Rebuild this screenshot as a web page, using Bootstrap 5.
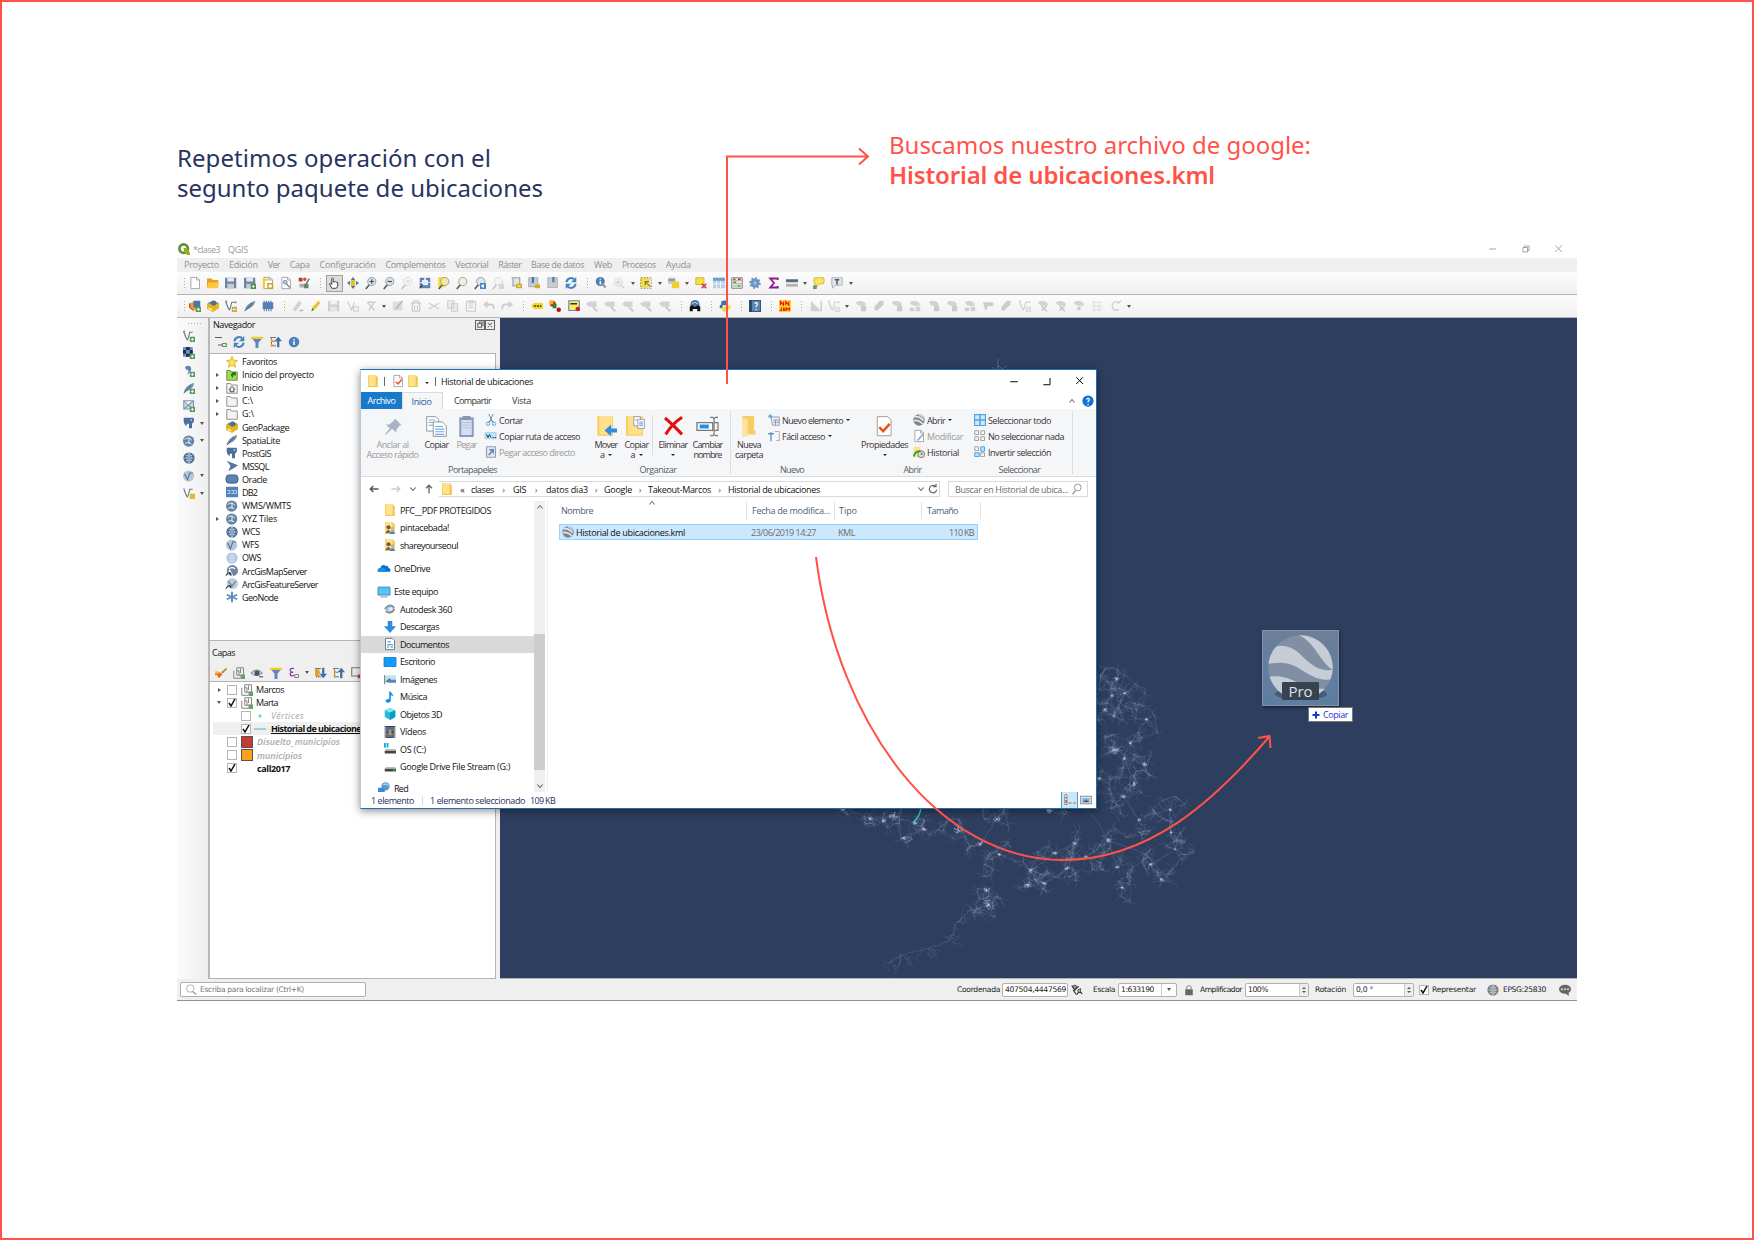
<!DOCTYPE html>
<html lang="es">
<head>
<meta charset="utf-8">
<title>Historial de ubicaciones</title>
<link href="https://cdn.jsdelivr.net/npm/bootstrap@5.3.0/dist/css/bootstrap.min.css" rel="stylesheet">
<style>
:root{--red:#ff5349;--navy:#28345f;--ui:"Open Sans","Noto Sans",sans-serif}
body{width:1754px;height:1240px;overflow:hidden;font-family:var(--ui);font-size:9px;line-height:1;color:#111;background:#fff}
.sheet{width:1754px;height:1240px;border:2px solid var(--red);position:relative;padding:0 175px}
[data-w]{white-space:nowrap;display:inline-block}
[data-i]{display:inline-flex;flex:none;align-items:center;justify-content:center}
[data-i] svg{width:12px;height:12px;display:block;overflow:visible}
.headline{height:238px;font-family:"Noto Sans",sans-serif;font-size:24px;line-height:30px}
.headline .ask{color:var(--navy);padding-top:141px;width:712px}
.headline .find{color:var(--red);padding-top:128px}
.headline b{font-weight:600}
.qgis{width:1400px;height:761px;background:#efefef;position:relative}
.q-title{height:18px;background:#fff;color:#999;padding-left:1px}
.q-menu{height:14px;background:#efefef;color:#909090;gap:9.9px;padding-left:7px;padding-bottom:1px}
.q-tools{height:22px;background:linear-gradient(#fcfcfc,#f0f0f0)}
.q-tools.one,.q-tools.two{border-bottom:1.5px solid #b5b5b5;height:23px}
.tl{width:18.2px;height:20px}
.tl.on{background:#dcdcdc;border:1px solid #a0a0a0;width:16.4px;height:17px;margin:0 .9px}
.tl.off{opacity:.32;filter:grayscale(1)}
.grip{width:12px;height:12px;flex:none;background:radial-gradient(circle,#aaa 0 .7px,transparent .9px) 6px 0/3px 3px repeat-y}
.grip.first{width:9px}
.dd{width:9px;flex:none;display:inline-flex;justify-content:center}
.dd::after{content:"";border:2.7px solid transparent;border-top:3px solid #555;border-bottom:0}
.q-body{height:661px}
.q-side{width:31px;background:linear-gradient(90deg,#fbfbfb,#efefef)}
.q-side::before{content:"";display:block;width:14px;height:3px;margin:4px 0 2px 10px;background:radial-gradient(circle,#aaa 0 .7px,transparent .9px) 0 0/3px 3px repeat-x}
.q-side>div{height:17.5px;padding-left:3px}
.q-side .tl{width:17px}
.q-panels{width:292px;border-left:2px solid #b8b8b8;padding-right:4px;height:661px}
.p-head{height:13px;padding:0 0 0 3px}
.p-tools{height:22px;padding-left:2px}
.tree{background:#fff;border:1px solid #b4b4b4;border-width:1px 1.5px 1px 0;padding-top:1px}
.t-row{height:13.1px;padding-left:1px}
.t-row .ar{width:12px;flex:none;display:inline-flex;justify-content:center}
.t-row .ar.r::after{content:"";border:2.5px solid transparent;border-left:3.5px solid #555;border-right:0}
.t-row .ar.d::after{content:"";border:2.7px solid transparent;border-top:3.5px solid #555;border-bottom:0}
.t-row [data-i]{width:17px;margin-right:2px}
.chk{width:10px;height:10px;border:1px solid #b5b5b5;background:#fff;flex:none;display:inline-flex;align-items:center;justify-content:center}
.chk svg{width:8px;height:8px}
.lay{padding-left:3px}
.lay .t-row{padding-left:0}
.lay .ar{width:14px;padding-right:2px}
.sw{width:12px;height:12px;border:1px solid #555;flex:none;margin:0 4px}
.dim{font-style:italic;color:#aaa;font-weight:600}
.q-map{flex:1;background:#2e3e5f;border-bottom:1px solid #b5b5b5;overflow:hidden;height:661px}
.q-map svg{display:block}
.q-status{height:22px;border-bottom:1px solid #9a9085;font-family:"DejaVu Sans","Open Sans",sans-serif;font-size:7.6px;color:#222}
.q-status .box{height:14px;background:#fff;border:1px solid #b0b0b0;border-radius:2px;display:inline-flex;align-items:center;flex:none;padding-left:2px;white-space:nowrap;overflow:hidden}
.spin{margin-left:auto;width:9px;height:12px;background:#eee;border-left:1px solid #ccc;display:inline-flex;flex-direction:column;align-items:center;justify-content:center;gap:2px}
.spin::before{content:"";border:2px solid transparent;border-bottom:2.5px solid #555;border-top:0}
.spin::after{content:"";border:2px solid transparent;border-top:2.5px solid #555;border-bottom:0}
/* explorer window */
.exp{position:absolute;left:358px;top:367px;width:737px;height:440px;background:#fff;border:1px solid #1a6fb4;border-left-color:#b9c7d6;box-shadow:0 2px 8px rgba(0,0,0,.45)}
.e-title{height:22px}
.e-tabs{height:17px}
.e-tabs .arch{width:41px;background:#1979ca;color:#fff}
.e-tabs .ini{width:41px;background:#f5f6f7;border:1px solid #dadbdc;border-bottom:0;color:#2b579a;padding-right:2px}
.rib{height:68px;background:#f5f6f7;border-bottom:1px solid #dadbdc;color:#3a3238}
.big{text-align:center;display:flex;flex-direction:column;align-items:center;flex:none;padding-top:5px}
.big [data-i]{height:24px}.big [data-i] svg{width:21px;height:21px}
.big .cp{line-height:9.6px;margin-top:2px}
.smalls{display:flex;flex-direction:column;padding-top:3px;flex:none}
.smalls>div{height:16px;display:flex;align-items:center;white-space:nowrap}
.smalls [data-i]{width:14px;margin-right:1px}
.grp{display:flex;flex-direction:column;height:67px;flex:none}
.grp .row1{display:flex;height:54px}
.grp .gl{color:#555c66;text-align:center;padding-top:2px}
.off-t{color:#9a9a9a}
.vs{width:1px;background:#dcdde0;flex:none}
.car{display:inline-block;border:2px solid transparent;border-top:2.5px solid #222;border-bottom:0;vertical-align:middle;margin:0 0 1px 3px}
.e-addr{height:24px;padding-left:7px}
.abox{height:16px;border:1px solid #d9d9d9;display:flex;align-items:center;flex:none;white-space:nowrap}
.sepc{width:17px;text-align:center;color:#555;flex:none}
.e-nav{width:173px;height:291px;overflow:hidden}
.n-row{height:17.5px;display:flex;align-items:center;padding-left:22px;flex:none;white-space:nowrap}
.n-row [data-i]{width:14px;margin-right:3px}
.n-row.top{padding-left:16px}
.n-row.sel{background:#d9d9d9}
.sb{width:11px;background:#f0f0f0;height:291px;display:flex;flex-direction:column;align-items:center}
.sb .thumb{width:11px;height:136px;background:#cdcdcd;margin-top:121px}
.c-head{color:#4c607a;height:18px;padding-top:1px}
.c-head>div{border-right:1px solid #e2e2e2;padding-left:5px;display:flex;align-items:center;flex:none}
.f-row{height:16px;background:#cce8ff;border:1px solid #99d1ff;width:419px;margin:5px 0 0 11px;color:#6d6d6d}
.e-stat{height:16px;color:#2a2f5a;padding-left:10px}
.overlay{position:absolute;left:-2px;top:-2px;width:1754px;height:1240px;pointer-events:none}
.drag{position:absolute;left:1260px;top:628px;width:77px;height:76px;background:linear-gradient(#6b7f99,#5d7da1);border:1px solid #7f93ab;box-shadow:1px 2px 3px rgba(0,0,0,.4)}
.drag .pro{position:absolute;left:19px;top:51px;width:37px;height:18px;background:#39424f;color:#dfe4ea;font-size:15px;line-height:18px;text-align:center;border-radius:1px}
.tipc{position:absolute;left:1306px;top:705px;width:45px;height:15px;background:#fff;border:1px solid #777;color:#2b36c8;display:flex;align-items:center;padding-left:3px;gap:3px}
</style>
<script src="https://cdn.jsdelivr.net/npm/bootstrap@5.3.0/dist/js/bootstrap.bundle.min.js"></script>
</head>
<body>
<main class="sheet">
  <header class="headline d-flex">
    <div class="ask"><span data-w="314">Repetimos operación con el</span><br><span data-w="366">segunto paquete de ubicaciones</span></div>
    <div class="find"><span data-w="422">Buscamos nuestro archivo de google:</span><br><b data-w="326">Historial de ubicaciones.kml</b></div>
  </header>

  <section class="qgis">
    <div class="q-title d-flex align-items-center"><span data-i="qgis"></span><span style="margin-left:3px" data-w="27">*clase3</span><span class="ms-2" data-w="20">QGIS</span>
      <span class="ms-auto d-flex align-items-center" style="gap:21px;margin-right:12px"><span data-i="min"></span><span data-i="rest"></span><span data-i="close"></span></span></div>
    <nav class="q-menu d-flex align-items-center">
      <span data-w="35">Proyecto</span><span data-w="29">Edición</span><span data-w="12">Ver</span><span data-w="20">Capa</span><span data-w="56">Configuración</span><span data-w="60">Complementos</span><span data-w="33">Vectorial</span><span data-w="23">Ráster</span><span data-w="53">Base de datos</span><span data-w="18">Web</span><span data-w="34">Procesos</span><span data-w="25">Ayuda</span>
    </nav>
    <div class="q-tools one d-flex align-items-center" data-tools="/ new open save saveas layout layman style | +hand panmap zin zout -z11 zfull zsel zlay zlast -znext newview bmnew bm refresh | ident -query ~ select ~ selform ~ desel table calc gear sigma ruler ~ tip note ~"></div>
    <div class="q-tools two d-flex align-items-center" data-tools="/ dsm geopk vnew feather chip | -pencils pencil -savee -vpt -vertex ~ -modify -trash -cut -copy -paste -undo -redo | label diag labelw -lab -lab -lab -lab -lab | bino | python | help | nn | -tri -vnew ~ -poly -rot -poly -polys -poly -poly -polys -shape -rot -vnew -split -split -merge -grid -turn ~"></div>

    <div class="q-body d-flex">
      <div class="q-side" data-side="vnew raster comma feather mesh elephant~ wms~ globe wfs~ vgold~"></div>
      <div class="q-panels">
        <div class="p-head d-flex align-items-center"><span data-w="42">Navegador</span><span class="ms-auto d-flex"><span data-i="float"></span><span data-i="pclose" style="margin-left:-2px"></span></span></div>
        <div class="p-tools d-flex align-items-center"><span class="tl" data-i="addl"></span><span class="tl" data-i="refresh"></span><span class="tl" data-i="filter"></span><span class="tl" data-i="collapse"></span><span class="tl" data-i="info"></span></div>
        <div class="tree" style="height:288px" data-tree=".star:Favoritos:35 >homep:Inicio del proyecto:72 >home:Inicio:21 >fold:C:\:11 >fold:G:\:12 .geopk:GeoPackage:47 .feather:SpatiaLite:38 .elephant:PostGIS:29 .mssql:MSSQL:27 .oracle:Oracle:25 .db2:DB2:15 .wms:WMS/WMTS:49 >wms:XYZ Tiles:35 .globe:WCS:18 .wfs:WFS:17 .ows:OWS:19 .arc:ArcGisMapServer:65 .arc2:ArcGisFeatureServer:76 .geonode:GeoNode:36"></div>
        <div class="p-head d-flex align-items-center" style="height:23px;padding-left:2px"><span data-w="23">Capas</span></div>
        <div class="p-tools d-flex align-items-center" style="height:17px"><span class="tl" data-i="brush"></span><span class="tl" data-i="group"></span><span class="tl" data-i="eye"></span><span class="tl" data-i="filter"></span><span class="tl" data-i="eps"></span><span class="dd"></span><span class="tl" data-i="expand"></span><span class="tl" data-i="collapse"></span><span class="tl" data-i="remove"></span></div>
        <div class="tree lay" style="height:298px">
          <div class="t-row d-flex align-items-center"><span class="ar r"></span><span class="chk"></span><span data-i="group" style="margin:0 1px"></span><span data-w="28">Marcos</span></div>
          <div class="t-row d-flex align-items-center"><span class="ar d"></span><span class="chk" data-c></span><span data-i="group" style="margin:0 1px"></span><span data-w="22">Marta</span></div>
          <div class="t-row d-flex align-items-center"><span class="ar" style="width:28px"></span><span class="chk"></span><span data-i="dot" style="width:18px"></span><span class="dim fw-normal" data-w="33">Vértices</span></div>
          <div class="t-row d-flex align-items-center overflow-hidden" style="background:#efefef"><span class="ar" style="width:28px"></span><span class="chk" data-c></span><span data-i="dash" style="width:18px"></span><b class="text-decoration-underline" data-w="94">Historial de ubicaciones</b></div>
          <div class="t-row d-flex align-items-center"><span class="ar"></span><span class="chk"></span><span class="sw" style="background:#c43c39"></span><span class="dim" data-w="83">Disuelto_municipios</span></div>
          <div class="t-row d-flex align-items-center"><span class="ar"></span><span class="chk"></span><span class="sw" style="background:#ff9e17"></span><span class="dim" data-w="45">municipios</span></div>
          <div class="t-row d-flex align-items-center"><span class="ar"></span><span class="chk" data-c></span><b style="margin-left:20px" data-w="33">call2017</b></div>
        </div>
      </div>
      <div class="q-map"><svg id="map" width="1077" height="660" viewBox="500 318 1077 660"></svg></div>
    </div>

    <footer class="q-status d-flex align-items-center">
      <span class="box" style="width:186px;margin-left:3px;height:15px;color:#777"><span data-i="mag" style="width:16px"></span><span style="margin-left:1px" data-w="104">Escriba para localizar (Ctrl+K)</span></span>
      <span style="margin-left:591px" data-w="43">Coordenada</span><span class="box" style="width:66px;margin-left:2px"><span data-w="61">407504,4447569</span></span><span data-i="track" style="width:18px"></span>
      <span style="margin-left:7px" data-w="22">Escala</span><span class="box" style="width:59px;margin-left:3px;padding-left:2px"><span data-w="33">1:633190</span><span class="dd" style="margin-left:auto;width:15px;border-left:1px solid #ccc;height:12px;align-items:center"></span></span>
      <span data-i="lock" style="width:23px"></span><span data-w="42">Amplificador</span><span class="box" style="width:64px;margin-left:3px"><span data-w="20">100%</span><span class="spin"></span></span>
      <span style="margin-left:6px" data-w="31">Rotación</span><span class="box" style="width:61px;margin-left:7px"><span data-w="17">0,0 °</span><span class="spin"></span></span>
      <span class="chk" data-c style="margin:0 3px 0 5px"></span><span data-w="44">Representar</span><span data-i="globeg" style="width:16px;margin-left:9px"></span><span style="margin-left:2px" data-w="43">EPSG:25830</span><span data-i="bubble" style="margin-left:13px"></span>
    </footer>
  </section>

  <section class="exp">
    <div class="e-title d-flex align-items-center" style="padding-left:5px">
      <span data-i="folder" style="width:14px"></span><span class="vs" style="height:9px;background:#666;margin:0 6px 0 4px"></span><span data-i="doccheck" style="width:13px"></span><span data-i="folder" style="width:14px;margin-left:2px"></span><span class="car" style="margin:3px 6px 0 5px"></span><span class="vs" style="height:9px;background:#666;margin-right:5px"></span><span data-w="92">Historial de ubicaciones</span>
      <span class="ms-auto d-flex" style="gap:21px;margin-right:10px"><span data-i="minb"></span><span data-i="maxb"></span><span data-i="closeb"></span></span>
    </div>
    <div class="e-tabs d-flex">
      <div class="arch d-flex align-items-center justify-content-center"><span data-w="28">Archivo</span></div><div class="ini d-flex align-items-center justify-content-center"><span data-w="20">Inicio</span></div>
      <div class="d-flex align-items-center" style="padding-left:11px;gap:21px;color:#333"><span data-w="37">Compartir</span><span data-w="19">Vista</span></div>
      <span class="ms-auto d-flex align-items-center" style="gap:4px;margin-right:2px"><span data-i="up"></span><span data-i="helpb"></span></span>
    </div>
    <div class="rib d-flex">
      <div class="grp" style="width:226px"><div class="row1">
        <div class="big off-t" style="width:63px"><span data-i="pin"></span><div class="cp"><span data-w="32">Anclar al</span><br><span data-w="52">Acceso rápido</span></div></div>
        <div class="big" style="width:25px"><span data-i="copyb"></span><div class="cp" data-w="24">Copiar</div></div>
        <div class="big off-t" style="width:35px"><span data-i="pasteb"></span><div class="cp" data-w="20">Pegar</div></div>
        <div class="smalls"><div><span data-i="scis"></span><span data-w="24">Cortar</span></div><div><span data-i="path"></span><span data-w="81">Copiar ruta de acceso</span></div><div class="off-t"><span data-i="lnk"></span><span data-w="76">Pegar acceso directo</span></div></div>
      </div><div class="gl" style="padding-right:3px"><span data-w="49">Portapapeles</span></div></div>
      <div class="grp" style="width:143px;padding-left:4px"><div class="row1">
        <div class="big" style="width:30px"><span data-i="mover"></span><div class="cp"><span data-w="23">Mover</span><br>a<i class="car"></i></div></div>
        <div class="big" style="width:31px"><span data-i="copyto"></span><div class="cp"><span data-w="24">Copiar</span><br>a<i class="car"></i></div></div>
        <span class="vs" style="height:40px;margin:6px 1px 0 0"></span>
        <div class="big" style="width:38px"><span data-i="redx"></span><div class="cp"><span data-w="29">Eliminar</span><br><i class="car m-0"></i></div></div>
        <div class="big" style="width:31px"><span data-i="rename"></span><div class="cp"><span data-w="30">Cambiar</span><br><span data-w="28">nombre</span></div></div>
      </div><div class="gl" style="padding-right:5px"><span data-w="37">Organizar</span></div></div>
      <span class="vs" style="margin:2px 0"></span>
      <div class="grp" style="width:126px"><div class="row1">
        <div class="big" style="width:36px"><span data-i="bigfold"></span><div class="cp"><span data-w="24">Nueva</span><br><span data-w="28">carpeta</span></div></div>
        <div class="smalls"><div><span data-i="newel"></span><span data-w="61">Nuevo elemento</span><i class="car"></i></div><div><span data-i="easy"></span><span data-w="43">Fácil acceso</span><i class="car"></i></div></div>
      </div><div class="gl" style="padding-right:4px"><span data-w="24">Nuevo</span></div></div>
      <div class="grp" style="width:114px"><div class="row1">
        <div class="big" style="width:55px"><span data-i="props"></span><div class="cp"><span data-w="47">Propiedades</span><br><i class="car m-0"></i></div></div>
        <div class="smalls"><div><span data-i="earth"></span><span data-w="18">Abrir</span><i class="car"></i></div><div class="off-t"><span data-i="edit"></span><span data-w="36">Modificar</span></div><div><span data-i="hist"></span><span data-w="32">Historial</span></div></div>
      </div><div class="gl" style="padding-right:3px"><span data-w="18">Abrir</span></div></div>
      <div class="grp" style="width:101px"><div class="row1"><div class="smalls" style="padding-left:2px">
        <div><span data-i="selall"></span><span data-w="63">Seleccionar todo</span></div><div><span data-i="selnone"></span><span data-w="76">No seleccionar nada</span></div><div><span data-i="selinv"></span><span data-w="63">Invertir selección</span></div></div>
      </div><div class="gl" style="padding-right:4px"><span data-w="42">Seleccionar</span></div></div>
      <span class="vs" style="margin:2px 0"></span>
    </div>
    <div class="e-addr d-flex align-items-center">
      <span data-i="back"></span><span data-i="fwd" style="margin-left:10px"></span><span data-i="dn" style="margin-left:5px;width:12px"></span><span data-i="upa" style="width:14px;margin-left:3px"></span>
      <div class="abox" style="width:501px;margin-left:3px;border-left:0"><span data-i="folder" style="width:15px"></span><span style="width:17px;text-align:center">«</span><span data-w="23">clases</span><span class="sepc" style="width:19px">›</span><span data-w="13">GIS</span><span class="sepc" style="width:20px">›</span><span data-w="42">datos dia3</span><span class="sepc" style="width:16px">›</span><span data-w="28">Google</span><span class="sepc" style="width:16px">›</span><span data-w="63">Takeout-Marcos</span><span class="sepc">›</span><span data-w="92">Historial de ubicaciones</span><span data-i="dn" class="ms-auto"></span><span data-i="reload"></span></div>
      <div class="abox" style="width:140px;margin-left:8px;padding-left:6px;color:#6d6d6d"><span data-w="113">Buscar en Historial de ubica...</span><span data-i="mag2" style="margin-left:3px"></span></div>
    </div>
    <div class="d-flex" style="height:291px">
      <div class="e-nav d-flex flex-column">
        <div class="n-row" style="margin-top:.5px"><span data-i="folder"></span><span data-w="91">PFC__PDF PROTEGIDOS</span></div>
        <div class="n-row"><span data-i="people"></span><span data-w="49">pintacebada!</span></div>
        <div class="n-row"><span data-i="people"></span><span data-w="58">shareyourseoul</span></div>
        <div class="n-row top" style="margin-top:5.5px"><span data-i="onedrive"></span><span data-w="36">OneDrive</span></div>
        <div class="n-row top" style="margin-top:6px"><span data-i="pc"></span><span data-w="44">Este equipo</span></div>
        <div class="n-row"><span data-i="adsk"></span><span data-w="52">Autodesk 360</span></div>
        <div class="n-row"><span data-i="down"></span><span data-w="39">Descargas</span></div>
        <div class="n-row sel"><span data-i="docs"></span><span data-w="49">Documentos</span></div>
        <div class="n-row"><span data-i="desk"></span><span data-w="35">Escritorio</span></div>
        <div class="n-row"><span data-i="pics"></span><span data-w="37">Imágenes</span></div>
        <div class="n-row"><span data-i="music"></span><span data-w="27">Música</span></div>
        <div class="n-row"><span data-i="cube"></span><span data-w="42">Objetos 3D</span></div>
        <div class="n-row"><span data-i="video"></span><span data-w="26">Vídeos</span></div>
        <div class="n-row"><span data-i="osd"></span><span data-w="26">OS (C:)</span></div>
        <div class="n-row"><span data-i="drive"></span><span data-w="110">Google Drive File Stream (G:)</span></div>
        <div class="n-row top align-items-end" style="margin-top:4px;height:13px"><span data-i="net"></span><span data-w="14">Red</span></div>
      </div>
      <div class="sb"><span data-i="up"></span><div class="thumb"></div><span class="mt-auto" data-i="dn"></span></div>
      <div style="border-left:1px solid #eee;margin-left:2px">
        <div class="c-head d-flex"><div style="width:199px;padding-left:13px;position:relative"><span data-w="32">Nombre</span><span data-i="up" style="position:absolute;left:98px;top:-5px"></span></div><div style="width:88px"><span data-w="78">Fecha de modifica...</span></div><div style="width:87px;padding-left:4px"><span data-w="18">Tipo</span></div><div style="width:59px"><span data-w="31">Tamaño</span></div></div>
        <div class="f-row d-flex align-items-center"><span data-i="earth" style="width:15px;margin:0 1px 0 0"></span><span style="color:#111" data-w="109">Historial de ubicaciones.kml</span><span style="margin-left:66px" data-w="65">23/06/2019 14:27</span><span style="margin-left:22px" data-w="17">KML</span><span class="ms-auto" style="margin-right:3px" data-w="25">110 KB</span></div>
      </div>
    </div>
    <div class="e-stat d-flex align-items-center"><span data-w="43">1 elemento</span><span class="vs" style="height:9px;margin:0 7px 0 8px"></span><span data-w="95">1 elemento seleccionado</span><span style="margin-left:5px" data-w="25">109 KB</span>
      <span class="ms-auto d-flex align-items-center justify-content-center" style="width:17px;height:16px;background:#cce8f6;border:1px solid #3f9fd0;border-width:0 1px"><span data-i="det"></span></span><span data-i="thumbs" style="margin:0 4px 0 2px"></span></div>
  </section>

  <svg class="overlay" viewBox="0 0 1754 1240" fill="none" stroke="#ff5349" stroke-width="2">
    <path d="M727 384V156.500H867M859 148.500l9 8-9 8"/>
    <path d="M816 557C838 728 940 860 1063 860C1150 860 1215 800 1269 737M1258 738l11.500-2 1 12"/>
  </svg>
  <div class="drag"><svg width="75" height="74" viewBox="0 0 75 74"><defs><clipPath id="ec"><circle cx="37.500" cy="36.500" r="32.300"/></clipPath></defs><ellipse cx="38" cy="63" rx="26" ry="6" fill="#34445c" opacity=".6"/><g clip-path="url(#ec)"><rect width="75" height="74" fill="#818fa5"/><path d="M32 3C52 8 54 30 74 42V30C70 22 62 10 52 2Z" fill="#c6cdd6"/><path d="M0 24C10 12 24 12 36 22C50 36 58 42 74 38V46C62 52 52 47 40 40C28 31 16 30 0 34Z" fill="#c6cdd6"/><path d="M0 48C18 40 34 52 44 56C56 59 66 58 74 55V80H0Z" fill="#c6cdd6"/></g></svg><div class="pro"><span data-w="24">Pro</span></div></div>
  <div class="tipc"><svg width="8" height="8"><path d="M4 .5v7M.5 4h7" stroke="#1534d8" stroke-width="2"/></svg><span data-w="25">Copiar</span></div>
</main>
<script>
const P=(d,s='#555',w=1.3,f='none')=>`<path d="${d}" stroke="${s}" stroke-width="${w}" fill="${f}"/>`;
const F=(d,f)=>`<path d="${d}" fill="${f}"/>`;
const C=(x,y,r,f,s='none')=>`<circle cx="${x}" cy="${y}" r="${r}" fill="${f}" stroke="${s}"/>`;
const plus=(c='#5a9a5a')=>F('M9 9h7v7H9z',c)+P('M12.500 10.500v4M10.500 12.500h4','#fff',1.2);
const mag=(c,x='')=>P('M6 10L1 16','#555',2)+C(9,6,5.5,c,'#888')+x;
const globe=c=>C(8,8,7.5,c)+P('M1 8h14M8 1v14M3 4q5 3 10 0M3 12q5-3 10 0M8 1q-6 7 0 14M8 1q6 7 0 14','#dfe8f0',.8);
const fold=F('M1.500 0h9.500l3.500 3V16h-13z','#f0c84f')+F('M2.500 0h9v14.500h-9z','#ffe08c');
const page=P('M2.500.5h8l3.500 3.500v11.500h-11.500z','#999',1.1,'#fff')+P('M10 .5V4h4','#999',1);
const earth=C(8,8,7.6,'#7d8590')+P('M2 4q6-2 12 5M1 9q6-2 12 4','#e4e6ea',2.2)+P('M8 1q4 1 6 5','#e4e6ea',1.4);
const poly=F('M1 3Q6-1 13 3Q16 8 12 8Q4 9 1 3','#888');
const I={
qgis:`<circle cx="7.500" cy="7.500" r="5.700" fill="none" stroke="#589632" stroke-width="3.600"/>`+F('M8 7h4l4 6v3h-4L8 11z','#93b023')+F('M6.500 6.500h4v3z','#ee7913'),
min:P('M3 8h9','#888',1),rest:P('M4 6h6v6H4zM6 6V4h6v6h-2','#888',1),close:P('M3 3l9 9M12 3l-9 9','#888',1),
new:page,open:F('M0 2h6l2 2h7v10H0z','#e0a020')+F('M2 7h14l-2 8H0z','#ffc83c'),
save:F('M0 1h15v14H0z','#6d85a0')+F('M3 1h9v5H3z','#e3e9ee')+F('M3 9h9v6H3z','#c2ccd6'),
layout:page+F('M1 2h8v3H4v9H1z','#f0d040')+F('M7 8h8v8H7z','#c9a520')+F('M9 10h4v4H9z','#fff'),
layman:page+P('M5 5l8 9','#7b8ea5',2)+C(7,7,2.500,'#bcd','#678'),
style:F('M1 1h5v5H1z','#b33a2a')+F('M2 9h6v5H2z','#aaa')+P('M15 2l-5 9','#596b80',2)+C(9,3,2.2,'#d0502a')+F('M8 9h6v6H8z','#6a8270'),
hand:P('M5 15L2 9q1-2 3 1V2q1-2 2 0v5q1-2 2 0q1-2 2 0q2-1 2 1v4l-2 3z','#222',1.1,'#fff'),
panmap:F('M8 0l3 4H5zM8 16l3-4H5zM0 8l4-3v6zM16 8l-4-3v6z','#4a74ad')+F('M5 4h6v8H5z','#e8c02a'),
zin:mag('#d6e1ec')+P('M9 3v6M6 6h6','#456',1.6),zout:mag('#d6e1ec')+P('M6 6h6','#456',1.6),
z11:mag('#eee')+P('M8 4v4M10.500 4v4','#777',1),zfull:F('M1 1h14v14H1z','#5f84b4')+F('M4 4h8v7H4z','#e8eef5')+F('M7 1h2v3H7zM1 7h3v1H1zM12 7h3v1h-3z','#fff')+P('M1 15l4-5','#333',1.5),
zsel:F('M0 0h9v14H0z','#f5e04a')+mag('#f4e8a0'),zlay:mag('#f4efdc'),zlast:mag('#dde5ee')+F('M8 8h8v8H8z','#4a86c0')+F('M9 12l4-3v6z','#fff'),znext:mag('#eee')+F('M9 9h7v7H9z','#999'),
newview:P('M2 1h11v11H4V1','#999',1.5,'#e4e4e4')+F('M8 9h8v6H8z','#d2ad1c')+P('M10 12h4','#fff'),bmnew:P('M1 1h12v12H1z','#999',1,'#c8ced4')+F('M5 0h3v9l-1.500-2L5 9z','#3a74b4')+F('M9 10h7v5H9z','#d2ad1c'),bm:P('M1 1h13v13H1z','#aaa',1,'#ccc')+F('M7 0h3v8L8.500 6 7 8z','#467cb8'),
refresh:P('M2 7a6 6 0 0 1 10-4M14 9a6 6 0 0 1-10 4','#4583bd',2.800)+F('M15 0v7H8zM1 16V9h7z','#4583bd'),
ident:C(7,6,6,'#4a7fb5')+P('M7 5v5M7 2v1.500','#fff',1.800)+P('M9 8l5 6','#999',3),query:C(7,7,5.500,'#ddd','#888')+C(7,7,2,'#888')+P('M11 11l4 4','#888',2),
select:F('M1 1h12v13H1z','#f5df3a')+`<path d="M1 1h14v14H1z" fill="none" stroke="#555" stroke-dasharray="2 2"/>`+P('M7 6l7 7M7 6v5M7 6h5','#667',1.4),
selform:F('M0 1h10v8H0z','#b9c4cf')+F('M5 6h10v9H5z','#f0d030')+P('M1 4h8','#607a96',1.5),desel:F('M1 1h11v9H1z','#f5df3a')+P('M1 1h11v9H1z','#c9a520',1)+P('M9 9l6 6M15 9l-6 6','#d33',2.2),
table:F('M0 1h16v14H0z','#bcd0e4')+F('M0 1h16v4H0z','#6f9dca')+P('M0 9h16M5 5v10M10 5v10','#fff',1),calc:P('M1 1h14v14H1z','#777',1.2,'#f4f4f4')+P('M2 5h12M2 9h12M2 12h12','#888',1)+P('M3 3h3M9 3h4','#c33',2)+P('M3 7h4M9 12h3','#3a3',2),
gear:`<circle cx="8" cy="8" r="6" fill="#6d94c2" stroke="#6d94c2" stroke-width="3.500" stroke-dasharray="2.300 2.300"/>`+C(8,8,2,'#a8c2e0'),sigma:P('M13 4V2H3l5 6-5 6h10v-2','#8b1a8b',2.400),
ruler:F('M0 3h16v4H0z','#5b6b7d')+F('M0 9h16v4H0z','#b4b4b4'),tip:P('M2 1h12q2 3 0 8H9l-5 5V9H2q-2-3 0-8z','#c8a828',1,'#f8e660')+F('M0 11h5v5H0z','#6a9a6a'),note:P('M1 1h14v10H6l-4 4v-4H1z','#9aa6b2',1,'#dfe6ec')+P('M5 3.500h6M8 3v7','#556',2),
dsm:F('M0 4l6 3v8L0 10z','#d24a2a')+F('M2 4l6-3 5 3v7l-6 3-5-4z','#e8a030')+F('M6 1h9v9H6z','#4a74ad')+plus(),geopk:F('M0 5l8-4 8 3v7l-8 5-8-4z','#e3b81e')+F('M1 4l7-3 7 3-7 3z','#5d84ad')+F('M2 10l5 2v2l-5-2z','#fff6b0')+C(9,4,3.400,'#4f6f95'),
vnew:P('M1 2q4 12 5 11T9 3h4','#66788a',1.500)+C(1.500,2,1.500,'#889')+C(14,3,1.500,'#889')+F('M9 9h7v7H9z','#c9b04a')+P('M10.500 12.500h4','#fff'),
vgold:P('M1 2q4 12 5 11T9 3h4','#66788a',1.500)+F('M9 9h7v7H9z','#e0bd20'),vgreen:P('M1 2q4 12 5 11T9 3h4','#66788a',1.500)+C(1.500,2,1.500,'#889')+plus(),feather:F('M1 15Q2 5 15 1Q14 9 4 13z','#7590ac')+P('M1 15L11 4','#3e5368',1),chip:F('M1 3h14v9H1z','#5580b4')+P('M3 1v14M6 1v14M9 1v14M12 1v14','#5580b4',1.500),
pencils:F('M1 13L9 1l4 3-8 11z','#888')+F('M10 13h5v2h-5z','#444'),pencil:F('M2 15l1-5 8-9 3 3-8 9z','#e6c436')+F('M2 15l1-4 2 2z','#554'),vertex:P('M3 3h10L5 14M3 3l10 11','#777',1.800),vpt:P('M1 2l5 11 4-10M9 9h6v6H9z','#777',1.500),modify:F('M1 2h13v12H1z','#aaa')+P('M14 1L5 12','#333',2),
trash:P('M1 4h14M5 4V1h6v3M3 4v11h10V4M6 7v6M10 7v6','#844',1.300),cut:P('M1 4l14 8M1 12l14-8','#777',1.500),copy:P('M1 1h8v10H1zM6 5h8v10H6z','#777',1.500,'#ddd'),paste:P('M2 2h12v13H2zM5 1h6v3H5zM5 7h6M5 10h6','#777',1.500),
undo:P('M3 6h8q4 0 3 6','#777',2.500)+F('M0 6l6-5v10z','#777'),redo:P('M13 6H5q-4 0-3 6','#777',2.500)+F('M16 6l-6-5v10z','#777'),
label:F('M0 8l4-4h12v8H4z','#f3d71f')+P('M4 8h3M8 8h3M12 8h2','#443',2),diag:C(5,5,4,'#d22')+C(3,3,3,'#eb2')+F('M5 5h5v6H5z','#1c8a3c')+C(13,13,3,'#b11'),labelw:P('M1 1h14v13H1z','#5a8ad0',1.500,'#ffe95c')+P('M3 5h9','#333',2)+C(13,12,3,'#c22'),lab:F('M0 5l4-3h10v7H4z','#888')+P('M9 9l6 6','#777',2.500),
bino:C(8,6,6,'#4f78a8')+F('M1 9q3-4 6 0h2q3-4 6 0v6h-4v-3H5v3H1z','#111')+P('M4 5q4-4 8 0','#dfe8f0',1),python:F('M3 6V2q5-3 9 0v5H5v4H1V7z','#3a74a8')+F('M14 6q3 4 0 6h-3v3q-4 2-7-1V9h8z','#ffd43b'),
help:F('M0 0h16v16H0z','#2c4a70')+F('M4 1h11v14H4z','#5d84b4')+P('M7.500 5q2-3 4 0q0 2-2 3v1.500M9.500 12v1.500','#fff',1.500),
nn:F('M0 0h16v16H0z','#ffd321')+P('M2 7V2l4 5V2M9 7V2l4 5V2M3 10v4H1M6 11h2v3H6zM10 10v4M12 14v-3h2v3','#e11',1.500),
tri:F('M1 1v14h14z','#888')+P('M15 1v14','#777',2),poly:poly+F('M8 8h7v7H8z','#777'),polys:poly+F('M1 10h6v5H1zM9 9h6v6H9z','#888'),rot:F('M2 9L9 1h5v5l-8 8H2z','#777'),shape:F('M1 3h14v5H8l-3 7z','#777'),split:poly+P('M6 14l7-6M6 8l7 7','#944',1.500),merge:poly+C(8,11,2.500,'#777'),grid:P('M1 3h14M1 8h14M1 13h14M4 1v14M11 1v14','#999',1),turn:P('M13 3Q3 0 3 8q1 7 9 5M10 5l5-4','#888',2),
raster:F('M0 0h13v13H0z','#6f93c0')+F('M4 0h5v4H4zM0 4h4v5H0zM9 4h4v5H9zM4 9h5v4H4z','#1d2f4a')+plus(),comma:F('M3 2q6-3 8 2q0 6-6 9q3-4 2-6q-4 0-4-5z','#5f86b5')+plus(),mesh:P('M1 1h13v11H1zM1 1l6 6 7-6M1 12l6-5 7 5','#7f97ae',1.400,'#ccdaea')+plus(),
elephant:F('M1 1h13q2 5-2 8v6H8V9H5v3Q0 10 1 1z','#4a6f9e')+C(11,4,1,'#fff'),wms:C(7.5,8,7.5,'#6383a8')+P('M2 6q5-4 10 1M3 11q5-3 8 1M8 3v9','#e6edf4',1.300),globe:globe('#3f6590'),globeg:globe('#777'),wfs:C(7.5,8,7.5,'#b4c6da')+P('M2 5l4 8 3-9h4','#51708f',1.400),ows:globe('#a8c4e2'),arc:C(8.500,7.500,7.500,'#6f86a2')+P('M4 5q4-3 8 0M1 15l4-8 4 8','#fff',1.500)+P('M0 14q4-7 7-1','#222',1.500),arc2:C(8.500,7.500,7.500,'#bccada')+P('M3 4l5 7 5-7','#5f7a98',1.500)+P('M0 14q4-7 7-1','#222',1.500),
mssql:F('M1 1l15 6q-5 4-13 8l3-7z','#54779f'),oracle:`<rect x="0" y="2.500" width="16" height="11" rx="4" fill="#5a83b4" stroke="#2d4a70"/>`,db2:F('M0 1h16v14H0z','#5482ba')+P('M2 6h3v4H2M7 6h3v4H7M11 6h3v4h-3','#dfeaf6',1),geonode:P('M8 1v14M1 5l14 6M1 11l14-6','#5f8abb',2.500),
float:P('M2 2h12v12H2zM5 6h5v5H5zM7 6V4h5v5h-2','#666',1.400),pclose:P('M2 2h12v12H2zM5 5l6 6M11 5l-6 6','#666',1.400),
addl:P('M0 2h9M4 12h6','#555',1.300)+P('M10 10h5v4h-5z','#5a9a5a',1.600),filter:F('M0 1h16v3H0z','#f0cc1e')+F('M2 4h12l-4 5v7H6V9z','#5a88be'),collapse:P('M0 2h8M3 7h4M3 13h5M2 3v11','#667',1.200)+F('M6 7l5-6 5 6h-3.500v8h-3V7z','#3f6fa8')+F('M1 5h3v3H1zM1 11h3v3H1z','#e6a32a'),expand:P('M0 2h8M3 7h4M3 13h5M2 3v11','#667',1.200)+F('M6 9l5 6 5-6h-3.500V1h-3v8z','#3f6fa8')+F('M0 3h6v9H0z','#e6a32a'),info:C(8,8,7,'#4a82bd')+P('M8 7v5M8 4v1.500','#fff',2),
star:P('M8 .5l2.300 5 5.200.5-4 3.500 1.300 5.500L8 12l-4.800 3L4.500 9.500l-4-3.500 5.200-.5z','#c9a520',1,'#ffe34d'),homep:P('M1 2h5l1 2h8v11H1z','#6a8a3a',1.200,'#a6d850')+F('M6 8l3-4 4 0 0 5-3-1-1 4z','#1c7b2c'),home:P('M1 2h5l1 2h8v11H1z','#888',1.200,'#f2f2f2')+P('M4 10l4-4 4 4M5.500 9v4h5V9','#333',1.200),fold:P('M1 2h5l1 2h8v11H1z','#888',1.200,'#f4f4f4'),
brush:F('M8 7L15 1l1 2-6 6z','#b98a3a')+F('M1 6l5 1 4 3-5 5-2-4-3 0z','#e8682a')+F('M0 6h5v3H0z','#f0c030'),group:P('M5 1h9v10H5zM1 5v10h9M5 5h3v6M10 2v6','#777',1.200)+F('M10 10h6v6h-6z','#6aa06a'),eye:P('M0 8q8-8 15 0q-8 7-15 0z','#678',1.200,'#dde')+C(8,8,3.5,'#456')+F('M11 12h5v2h-5z','#777'),eps:P('M8 2Q2 1 3 5q1 2 4 2Q2 7 3 10q1 3 5 1','#7a3c8a',1.600)+P('M9 10h5v4H9z','#777',1.200),remove:P('M1 1h13v11H1z','#777',1.500)+F('M9 10h7v5H9z','#d33'),
dot:C(8,8,2.200,'#5fe0d8'),dash:P('M0 8h16','#3fc9d4',1.500),mag:C(7,6,5,'none','#999')+P('M10 10l5 4','#999',1.500),
track:P('M1 2l4 6 5-5M8 14l5-8M3 8l4 6M10 9l5 4','#333',1.600)+C(5,4,2.500,'#999','#333')+C(11,9,2,'#bbb','#333'),lock:F('M3 7h10v8H3z','#666')+P('M5 7V4q3-4 6 0v3','#999',1.600),bubble:`<ellipse cx="8" cy="7" rx="8" ry="6" fill="#666"/>`+F('M8 12h5v4z','#666')+P('M3 7h2M7 7h2M11 7h2','#fff',2),
folder:fold,doccheck:page+P('M5 9l3 3 5-6','#e8541c',2),minb:P('M3 9h10','#000',1.300),maxb:P('M3 13h9V4','#000',1.300),closeb:P('M3 3l9 9M12 3l-9 9','#000',1.300),up:P('M4.500 10L8 6l3.500 4','#777',1.500),dn:P('M4.500 6L8 10l3.500-4','#666',1.500),helpb:C(8,8,7.500,'#0f74d1')+P('M6 6q2-3 4 0q0 1.500-2 2.500v1.500M8 12v1.500','#fff',1.500),
pin:F('M10 2l5 5-1.500.3-2.500 3 0 2.500-3.300-3L3 14 2 14l4-4.500-3-3 2.500 0 3-2.500z','#a8b4c6'),copyb:P('M.5.5h7l2 2v9H.5z','#8a9099',.7,'#fff')+P('M2 3h5M2 5h6M2 7h6','#7ba7dc',.8)+P('M5.500 4.500h7l3 3v8H5.500z','#8a9099',.7,'#fff')+P('M7 8h6M7 10h7M7 12h7M7 14h7','#6fa8ec',.8),pasteb:F('M2.500 1h11V16h-11z','#8c9bbb')+F('M4 3h8v11.500H4z','#d3dff2')+F('M5 0h6v3H5z','#8c95a8')+P('M4.500 5h7M4.500 7h7M4.500 9h7','#a9bad8',.6),
scis:P('M5 0l5 10M11 0L6 10','#7b8791',1.300)+P('M4 11l4-2 4 2','#2d9bd8',1.200)+C(4,13,2.200,'#fff','#2186d0')+C(12,13,2.200,'#fff','#2186d0'),path:P('M0 3.500h15v8H0z','#8ecdf2',1,'#bfe3f8')+P('M2 6l2 4 2-4 2 4M10 10h1.500M13 10h1.500','#234',1.300),lnk:P('M2 1h12v14H2z','#8ea0bf',1.500,'#e0e6f2')+P('M5 12l5-6M6 5h5v5','#6b7fa6',1.800),
mover:F('M1 0h12v15H1z','#f5cd60')+F('M2.500 0h10v14h-10z','#ffe08c')+F('M6.500 11l5-4.500v3H16v3h-4.500v3z','#2e8ce0'),copyto:F('M0 0h13v15H0z','#f5cd60')+F('M1.500 0h11v14h-11z','#ffe08c')+P('M6 .5h5v7H6z','#889',.6,'#fff')+P('M9 2.500h5v7H9z','#889',.6,'#fff')+P('M10 4.500h3M10 6h3M10 7.500h3M7 3h2','#6fa8ec',.8),
redx:P('M1.500 1.500q6 5 13 12.500M14.500 1Q7 6 2 14','#e01010',2.300),rename:P('M0 5h12v6H0z','#777',1,'#fff')+F('M2 6.500h7v3H2z','#1e90f0')+P('M10 1h2l1 1 1-1h2M13 2v12M10 15h2l1-1 1 1h2M13 5h3v6h-3','#777',.9),bigfold:F('M2.500 0h9v11h1v3H6l-3 2z','#f5cf66')+F('M2.500 1l4 1.500V16l-4-1.500z','#ffe59c'),
newel:P('M4 4h11v11H6zM7 8h8M7 11h8M10 8v7','#7a8a9a',1,'#eef')+P('M3 0v6M0 3h6M1 1l4 4M5 1L1 5','#35a0e0',1),easy:P('M4 3v12M0 5h8','#2a6ab0',1.300)+P('M9 2h6v12h-4','#999',1),props:P('M2.500.5h8l2.500 2.500v12h-10.500z','#999',.7,'#fff')+P('M4 8.5l3 3 5-5.500','#e8541c',1.900),earth:earth,edit:page+P('M14 5L6 14','#8cace0',2.500),hist:F('M1 1h9v14H1z','#ffe08c')+C(11,11,4.500,'#ddd','#555')+P('M1 14q2-8 9-7','#22a12a',2.500)+P('M11 9v2h2','#333',1),
selall:F('M0 0h16v16H0z','#4aa5e8')+F('M1.500 1.500h5.500v5.500h-5.500zM9 1.500h5.500v5.500H9zM1.500 9h5.500v5.500h-5.500zM9 9h5.500v5.500H9z','#cfe9fb'),selnone:P('M1 1h5v5H1zM9 1h5v5H9zM1 9h5v5H1zM9 9h5v5H9z','#9a9a9a',1.200),selinv:P('M1 1h5v5H1zM9 9h5v5H9z','#9a9a9a',1.200)+P('M9 1h5v6H9zM1 9h6v5H1z','#4aa5e8',1.300,'#bfe0fa'),
back:P('M14 8H3M7 4L3 8l4 4','#555',1.900),fwd:P('M2 8h11M9 4l4 4-4 4','#ccc',1.900),upa:P('M8 14V3M4 7l4-4 4 4','#666',1.800),reload:P('M12 5a5 5 0 1 0 1 4M12 1v4H8','#666',1.600),mag2:C(9,6,4.500,'none','#777')+P('M6 10l-4 5','#777',1.500),
people:fold+C(6,7,2.700,'#6a5a4a')+F('M2 15q3-8 7-1z','#566')+C(11,9,2.500,'#d0b090')+F('M7 16q4-8 8 0z','#4a86c0'),onedrive:F('M0 13Q-2 9 3 8Q5 2 10 5q4 0 4 3q4 1 2 5z','#0a6fc8')+F('M3 8q5-3 9 5H0q-1-4 3-5z','#1490df'),pc:P('M0 1.500h16v10.500H0z','#4a87b8',1.300,'#58c0fa')+P('M3 14.500h10','#88a',1.200),adsk:C(8,8,6,'#b4c4cc')+P('M1 8q5-8 13-2M2 11q7 5 12-3','#6f8c9c',2)+C(9,8,2.500,'#eef'),down:F('M5 0h6v7h5l-8 9-8-9h5z','#2f8be0'),
docs:P('M2 .5h9l3 3v12H2z','#777',1.300,'#fff')+P('M5 5h4M4 9h8M4 12h3M9 12h3','#1e8bd8',1.500),desk:P('M0 2h16v12H0z','#1470b8',1,'#0e9cff'),pics:F('M0 3h16v10H0z','#bfe0f6')+F('M2 12l5-5 5 5z','#3a7a5a')+F('M0 3h1.500v12H0z','#888')+F('M6 9h10v4H6z','#5f86b8'),music:P('M8 13V1q1 4 4 5','#0e96e8',2.200)+`<ellipse cx="5.500" cy="13" rx="3.500" ry="2.500" fill="#0e96e8"/>`,cube:F('M8 0l7 3v9l-7 4-7-4V3z','#28bcd4')+F('M8 0l7 3-7 3-7-3z','#8be8f0')+F('M8 6l7-3v9l-7 4z','#0a9cc0'),video:F('M1 0h14v16H1z','#333')+F('M4 1h8v6H4z','#4a6fb8')+F('M4 9h8v6H4z','#5a70a0')+F('M6 5h4v7H6z','#c09a3a')+P('M2.500 1v15M13.500 1v15','#ddd',1.200),
osd:F('M1 10h15v4H1z','#444')+F('M3 8h12l1 2H1z','#bbb')+F('M0 0h2.500v6H0zM3.500 0h2.500v6H3.500z','#18a8e8'),drive:F('M1 10h15v4H1z','#444')+F('M3 8h12l1 2H1z','#bbb')+F('M12 11.500h3v1.500h-3z','#3c5'),net:C(10,7,5.500,'#5a9ad0')+F('M0 9h9v6H0z','#3a8ad0')+P('M7 5q4-3 7 1','#cfe',1.200),
det:P('M1 1h3v4H1zM1 5h3v4H1zM1 9h3v5H1z','#777',1,'#fff')+P('M6 12h4M12 12h4','#555',1)+F('M2 10h2v2H2z','#d33'),thumbs:P('M1 3h14v10H1z','#888',1.500,'#fff')+F('M3 5h10v6H3z','#7ab4e0')+F('M3 11l5-3 5 3z','#356')
};
I.saveas=I.save+plus('#5a8a4a');I.savee=I.save;I.featherg=I.feather+plus();
const svg=n=>`<svg viewBox="0 0 16 16">${I[n]||''}</svg>`;
document.querySelectorAll('[data-tools]').forEach(r=>{r.innerHTML=r.dataset.tools.split(' ').map(t=>{
  if(t=='/')return '<span class="grip first"></span>';
  if(t=='|')return '<span class="grip"></span>';
  if(t=='~')return '<span class="dd"></span>';
  const k=t[0]=='-'?'off':t[0]=='+'?'on':'';
  return `<span class="tl ${k}" data-i="${k?t.slice(1):t}"></span>`}).join('')});
document.querySelectorAll('[data-side]').forEach(r=>{r.innerHTML=r.dataset.side.split(' ').map(t=>{const n=t.replace('~','');return `<div class="d-flex align-items-center"><span class="tl" data-i="${n=='vnew'?'vgreen':n=='feather'?'featherg':n}"></span>${t.endsWith('~')?'<span class="dd"></span>':''}</div>`}).join('')});
document.querySelectorAll('[data-tree]').forEach(r=>{r.innerHTML=[...r.dataset.tree.matchAll(/([.>])(\w+):(.+?):(\d+)(?= [.>]|$)/g)].map(m=>`<div class="t-row d-flex align-items-center"><span class="ar ${m[1]=='>'?'r':''}"></span><span data-i="${m[2]}"></span><span data-w="${m[4]}">${m[3]}</span></div>`).join('')});
document.querySelectorAll('[data-i]').forEach(e=>e.innerHTML=svg(e.dataset.i));
document.querySelectorAll('[data-c]').forEach(e=>e.innerHTML='<svg viewBox="0 0 8 8"><path d="M1 4l2 3 4-7" fill="none" stroke="#111" stroke-width="1.500"/></svg>');
/* letter spacing that gives each label its set width */
document.querySelectorAll('[data-w]').forEach(e=>{const w=e.getBoundingClientRect().width;e.style.letterSpacing=((e.dataset.w-w)/e.textContent.length).toFixed(3)+'px'});
/* street network of the map layer */
let s=7;const R=()=>(s=(s*16807)%2147483647)/2147483647;
const raw=[[950,117,3],[974,160,2],[937,168,2],[915,210,3],[941,228,1],[1038,238,2],[945,330,6],[990,310,2],[972,355,2],[1033,372,3],[1002,432,3],[969,470,3],[898,415,3],[1110,510,2],[1017,540,2],[925,600,4],[1113,577,2],[1053,673,3],[966,743,2],[858,650,2],[765,640,3],[801,685,3],[692,692,3],[823,610,2],[748,512,4],[590,538,4],[475,570,6],[540,612,4],[598,643,2],[683,737,5],[732,730,3],[565,795,8],[560,750,4],[372,568,3],[345,550,3],[282,528,6],[250,543,3],[210,535,3],[310,594,3],[130,507,4],[1125,628,1],[1085,720,3],[952,682,2]];
const ct=raw.map(([x,y,k])=>[800+x/3,640+y/3,k]);
let thin='',mid='',dots='';
const walk=(x,y,a,n,l)=>{let d=`M${x.toFixed(1)} ${y.toFixed(1)}`;for(let i=0;i<n;i++){a+=(R()-.5)*2;x+=Math.cos(a)*l;y+=Math.sin(a)*l;d+=`L${x.toFixed(1)} ${y.toFixed(1)}`;if(R()<.15&&n>3)thin+=walk(x,y,a+(R()<.5?1.2:-1.2),3,l)}return d};
/* a crooked road between two places */
const road=(x,y,u,v)=>{const n=Math.max(2,Math.round(Math.hypot(u-x,v-y)/3));let d=`M${x.toFixed(1)} ${y.toFixed(1)}`;for(let i=1;i<n;i++)d+=`L${(x+(u-x)*i/n+(R()-.5)*2.6).toFixed(1)} ${(y+(v-y)*i/n+(R()-.5)*2.6).toFixed(1)}`;return d+`L${u.toFixed(1)} ${v.toFixed(1)}`};
const hamlets=[];
ct.forEach(([x,y,k])=>{
 const w=x<935;
 for(let j=0;j<(w?3:6);j++){const r=(w?5:8)+R()*(w?6:12),a=R()*6.28,hx=x+r*Math.cos(a),hy=y+r*Math.sin(a)*.85;if(hy<892||hx>1100||x<1000)hamlets.push([hx,hy])}
 for(let j=0;j<(w?4:6);j++)thin+=walk(x,y,R()*6.28,4+R()*3|0,2.1);
 for(let j=0;j<k*7;j++){const r=k*.85*R(),a=R()*6.28;dots+=`<rect x="${(x+r*Math.cos(a)-.6).toFixed(1)}" y="${(y+r*.8*Math.sin(a)-.6).toFixed(1)}" width="1.300" height="1.100" opacity="${(.15+R()*.35).toFixed(2)}"/>`}
});
const all=[...ct,...hamlets];
hamlets.forEach(([x,y])=>{
 const near=all.map(p=>[Math.hypot(p[0]-x,p[1]-y),p]).filter(p=>p[0]>1&&p[0]<28).sort((a,b)=>a[0]-b[0]).slice(0,3);
 near.forEach(([,p])=>thin+=road(x,y,p[0],p[1]));
 for(let j=0;j<4;j++)thin+=walk(x,y,R()*6.28,3+R()*3|0,1.9);
});
ct.forEach(([x,y],i)=>ct.forEach(([u,v],j)=>{if(j>i&&Math.hypot(u-x,v-y)<30&&R()<.6)mid+=road(x,y,u,v)}));
const tail=[[988,905],[971,910],[956,924],[950,940],[927,949],[903,955],[889,963]];
mid+=tail.slice(1).map((p,i)=>road(...tail[i],...p)).join('')+'M965 903L975 911L980 914L986 920M1085 808L1098 822L1108 841L1125 846L1147 855L1160 870L1178 887';
tail.forEach(([x,y],i)=>{for(let j=0;j<7;j++)thin+=walk(x+(R()-.5)*12,y+(R()-.5)*6,(i<4?-.7:.6)+R()*1.3,4+R()*4|0,2)});
map.innerHTML=`<path d="${thin}" fill="none" stroke="#aab6cc" stroke-opacity=".21" stroke-width=".6"/><path d="${mid}" fill="none" stroke="#b8c3d6" stroke-opacity=".24" stroke-width=".7"/><g fill="#c5cddb">${dots}</g><path d="M921 808q-1 8-8 15" stroke="#2fd0c4" stroke-width="1.500" fill="none"/><path d="M998 359v10M992 367l3 3 4-4 3 3 5-3" stroke="#7484a0" stroke-opacity=".6" stroke-width="1" fill="none"/>`;
</script>
</body>
</html>
